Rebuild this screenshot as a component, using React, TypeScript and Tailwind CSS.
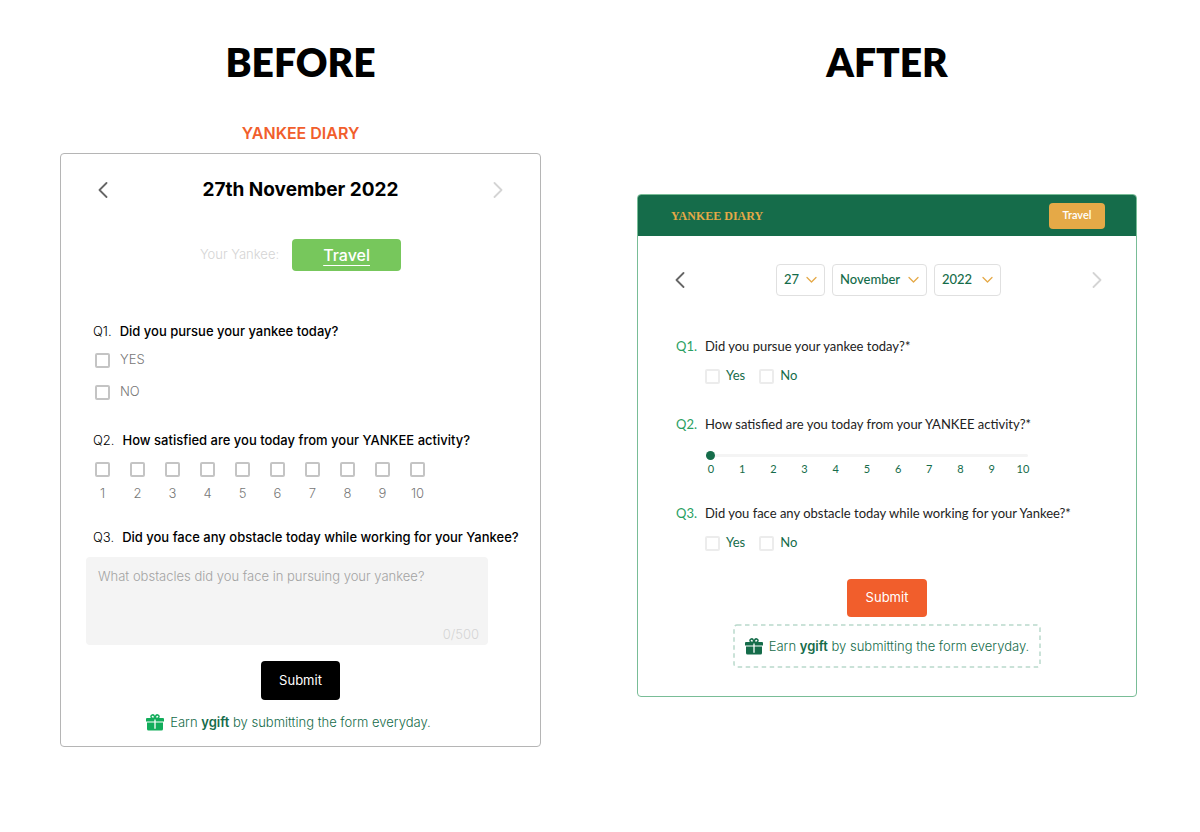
import { useState } from 'react';
import type { ReactNode } from 'react';

const ratings = [1, 2, 3, 4, 5, 6, 7, 8, 9, 10];
const steps   = [0, 1, 2, 3, 4, 5, 6, 7, 8, 9, 10];
const months  = ['January', 'February', 'March', 'April', 'May', 'June', 'July',
                 'August', 'September', 'October', 'November', 'December'];

function Chevron({ dir, className }: { dir: 'left' | 'right' | 'down'; className: string }) {
  const paths = {
    left:  'M8.5 1 1.5 8l7 7',
    right: 'M1.5 1l7 7-7 7',
    down:  'M1 1.5l4.5 4.5L10 1.5',
  };
  return (
    <svg aria-hidden="true" className={className} fill="none" stroke="currentColor"
      strokeWidth={dir === 'down' ? 1.3 : 1.8} strokeLinecap="round" strokeLinejoin="round"
      viewBox={dir === 'down' ? '0 0 11 8' : '0 0 10 16'}>
      <path d={paths[dir]} />
    </svg>
  );
}

function GiftIcon({ className }: { className: string }) {
  return (
    <svg aria-hidden="true" viewBox="0 0 18 17" className={className}>
      <path fill="currentColor" d="M1 4h16a1 1 0 0 1 1 1v2.6H0V5a1 1 0 0 1 1-1Z" />
      <path fill="currentColor" d="M1 8.4h16V15a1.6 1.6 0 0 1-1.6 1.6H2.6A1.6 1.6 0 0 1 1 15Z" />
      <path fill="none" stroke="currentColor" strokeWidth="1.5"
        d="M9 4.3H6.7a1.7 1.7 0 1 1 1.6-2.2L9 4.3l.7-2.2a1.7 1.7 0 1 1 1.6 2.2Z" />
      <path stroke="#fff" strokeWidth="1.3" d="M9 5.4v9.4" />
    </svg>
  );
}

function EarnNote({ iconClass }: { iconClass: string }) {
  return (
    <>
      <GiftIcon className={iconClass} />
      <span className="font-[Inter,sans-serif] text-[13px] leading-5 font-light whitespace-nowrap text-[#156c4a]">
        Earn <strong className="font-semibold">ygift</strong> by submitting the form everyday.
      </span>
    </>
  );
}

function OldCheck({ label }: { label: string }) {
  return (
    <label className="flex h-5 items-center gap-[10px] text-[13px] font-light text-[#777]">
      <input type="checkbox" className="size-[15px] appearance-none rounded-[2px] border-2 border-[#c4c4c4] checked:bg-[#c4c4c4]" />
      {label}
    </label>
  );
}

function NewCheck({ label }: { label: string }) {
  return (
    <label className="flex h-5 items-center gap-[6px] text-[13px] text-[#156c4a]">
      <input type="checkbox" className="size-[15px] appearance-none rounded-[2px] border-2 border-[#ececec] checked:bg-[#156c4a]" />
      {label}
    </label>
  );
}

function DateSelect({ label, value, options, className }:
  { label: string; value: string; options: string[]; className: string }) {
  return (
    <div className="relative">
      <select aria-label={label} defaultValue={value}
        className={`h-8 appearance-none rounded border border-[#e0e0e0] bg-white pl-[7px] text-[13px] font-medium text-[#156c4a] ${className}`}>
        {options.map(o => <option key={o}>{o}</option>)}
      </select>
      <Chevron dir="down" className="pointer-events-none absolute top-3 right-2 h-2 w-[11px] text-[#e5a947]" />
    </div>
  );
}

function NewQuestion({ num, children }: { num: string; children: ReactNode }) {
  return (
    <h3 className="flex gap-2 pl-px text-[13px] leading-5 whitespace-nowrap text-[#222]">
      <span className="text-[#2a9f62]">{num}</span>{children}
    </h3>
  );
}

function OldQuestion({ num, children }: { num: string; children: ReactNode }) {
  return (
    <h3 className="flex gap-2 px-[7px] text-[13px] leading-5 font-medium whitespace-nowrap text-black">
      <span className="font-light">{num}</span>{children}
    </h3>
  );
}

function BeforeCard() {
  const [text, setText] = useState('');

  return (
    <form onSubmit={e => e.preventDefault()}
      className="rounded border border-[#b5b5b5] px-[25px] pt-[21px] pb-[14px]">
      <div className="flex h-[30px] items-center justify-between px-3">
        <button type="button" aria-label="Previous day"><Chevron dir="left" className="h-4 w-[10px] text-[#666]" /></button>
        <h2 className="text-[19px] font-bold text-black">27th November 2022</h2>
        <button type="button" aria-label="Next day"><Chevron dir="right" className="h-4 w-[10px] text-[#d4d4d4]" /></button>
      </div>

      <div className="mt-[34px] flex items-center justify-center gap-[13px]">
        <span className="text-[13px] font-light text-[#d4d4d4]">Your Yankee:</span>
        <button type="button" className="h-8 w-[109px] rounded bg-[#77c75c] text-base font-medium text-white underline underline-offset-4">
          Travel
        </button>
      </div>

      <div className="mt-[50px]">
        <OldQuestion num="Q1.">Did you pursue your yankee today?</OldQuestion>
        <div className="mt-[9px] flex flex-col gap-3 pl-[9px]">
          <OldCheck label="YES" />
          <OldCheck label="NO" />
        </div>
      </div>

      <div className="mt-7">
        <OldQuestion num="Q2.">How satisfied are you today from your YANKEE activity?</OldQuestion>
        <div className="mt-3 flex gap-5 pl-[9px]">
          {ratings.map(n => (
            <label key={n} className="flex w-[15px] flex-col items-center gap-[6px] text-[13px] leading-5 font-light text-[#777]">
              <input type="checkbox" className="size-[15px] appearance-none rounded-[2px] border-2 border-[#c4c4c4] checked:bg-[#c4c4c4]" />
              {n}
            </label>
          ))}
        </div>
      </div>

      <div className="mt-6">
        <OldQuestion num="Q3.">Did you face any obstacle today while working for your Yankee?</OldQuestion>
        <div className="relative mt-[10px] mr-[27px]">
          <textarea aria-label="Obstacles" maxLength={500} value={text} onChange={e => setText(e.target.value)}
            placeholder="What obstacles did you face in pursuing your yankee?"
            className="block h-[88px] w-full resize-none rounded bg-[#f4f4f4] px-3 py-[9px] text-[13px] leading-5 font-light placeholder:text-[#a3a3a3]" />
          <span className="absolute right-[9px] bottom-px text-[13px] leading-5 font-light text-[#d4d4d4]">{text.length}/500</span>
        </div>
      </div>

      <button type="submit" className="mx-auto mt-4 block h-[39px] w-[79px] rounded bg-black text-[13px] text-white">Submit</button>
      <p className="mt-3 mr-6 flex h-5 items-center justify-center gap-[6px]">
        <EarnNote iconClass="h-[17px] w-[18px] text-[#12ad5b]" />
      </p>
    </form>
  );
}

function AfterCard() {
  const [level, setLevel] = useState(0);

  return (
    <form onSubmit={e => e.preventDefault()}
      className="overflow-hidden rounded border border-[#79bd97] font-[Lato,sans-serif]">
      <header className="flex h-[41px] items-center justify-between bg-[#156c4a] pr-[31px] pl-[33px]">
        <h2 className="font-['Liberation_Serif',serif] text-xs font-bold text-[#e5a947]">YANKEE DIARY</h2>
        <button type="button" className="h-[26px] w-14 rounded bg-[#e5a947] text-[11px] font-semibold text-white">Travel</button>
      </header>

      <div className="pt-7 pr-[34px] pb-7 pl-[37px]">
        <div className="flex items-center justify-between">
          <button type="button" aria-label="Previous day"><Chevron dir="left" className="h-4 w-[10px] text-[#666]" /></button>
          <div className="flex gap-[7px]">
            <DateSelect label="Day" value="27" options={['25', '26', '27']} className="w-[49px]" />
            <DateSelect label="Month" value="November" options={months} className="w-[95px]" />
            <DateSelect label="Year" value="2022" options={['2020', '2021', '2022']} className="w-[67px]" />
          </div>
          <button type="button" aria-label="Next day"><Chevron dir="right" className="h-4 w-[10px] text-[#d4d4d4]" /></button>
        </div>

        <div className="mt-10">
          <NewQuestion num="Q1.">Did you pursue your yankee today?*</NewQuestion>
          <div className="mt-[10px] flex gap-[14px] pl-[30px]">
            <NewCheck label="Yes" />
            <NewCheck label="No" />
          </div>
        </div>

        <div className="mt-7">
          <NewQuestion num="Q2.">How satisfied are you today from your YANKEE activity?*</NewQuestion>
          <div className="mt-4 mr-[74px] ml-[31px]">
            <input type="range" aria-label="Satisfaction" min={0} max={10} value={level}
              onChange={e => setLevel(Number(e.target.value))}
              className="block h-[10px] w-full appearance-none bg-transparent [&::-webkit-slider-runnable-track]:h-[3px] [&::-webkit-slider-runnable-track]:rounded-full [&::-webkit-slider-runnable-track]:bg-[#f4f4f4] [&::-webkit-slider-thumb]:-mt-[3px] [&::-webkit-slider-thumb]:size-[9px] [&::-webkit-slider-thumb]:appearance-none [&::-webkit-slider-thumb]:rounded-full [&::-webkit-slider-thumb]:bg-[#156c4a]" />
            <div className="flex justify-between text-[11px] leading-[18px] text-[#156c4a]">
              {steps.map(n => <span key={n} className="flex w-[10px] justify-center">{n}</span>)}
            </div>
          </div>
        </div>

        <div className="mt-[25px]">
          <NewQuestion num="Q3.">Did you face any obstacle today while working for your Yankee?*</NewQuestion>
          <div className="mt-[10px] flex gap-[14px] pl-[30px]">
            <NewCheck label="Yes" />
            <NewCheck label="No" />
          </div>
        </div>

        <div className="mt-[26px] mr-[3px] flex flex-col items-center gap-[7px]">
          <button type="submit" className="h-[38px] w-20 rounded bg-[#f15e2c] font-[Inter,sans-serif] text-[13px] text-white">Submit</button>
          <p className="relative flex h-11 w-[308px] items-center justify-center gap-[6px]">
            <svg aria-hidden="true" className="absolute inset-0 size-full text-[#b9d9cb]">
              <rect x="1" y="1" width="306" height="42" rx="3" fill="none" stroke="currentColor" strokeWidth="1.5" strokeDasharray="4.5 3.5" />
            </svg>
            <EarnNote iconClass="h-[17px] w-[18px] text-[#156c4a]" />
          </p>
        </div>
      </div>
    </form>
  );
}

export default function App() {
  return (
    <main className="grid min-h-screen grid-cols-[minmax(0,481fr)_minmax(0,500fr)] items-start gap-24 bg-white pt-9 pr-[63px] pb-20 pl-[60px] font-[Inter,sans-serif]">
      <section>
        <h1 className="text-center font-[Lato,sans-serif] text-[39px] leading-[52px] font-extrabold text-black">BEFORE</h1>
        <p className="mt-[35px] mb-[10px] text-center text-base leading-5 font-semibold text-[#f15e2c]">YANKEE DIARY</p>
        <BeforeCard />
      </section>
      <section>
        <h1 className="mb-[106px] text-center font-[Lato,sans-serif] text-[39px] leading-[52px] font-extrabold text-black">AFTER</h1>
        <AfterCard />
      </section>
    </main>
  );
}
